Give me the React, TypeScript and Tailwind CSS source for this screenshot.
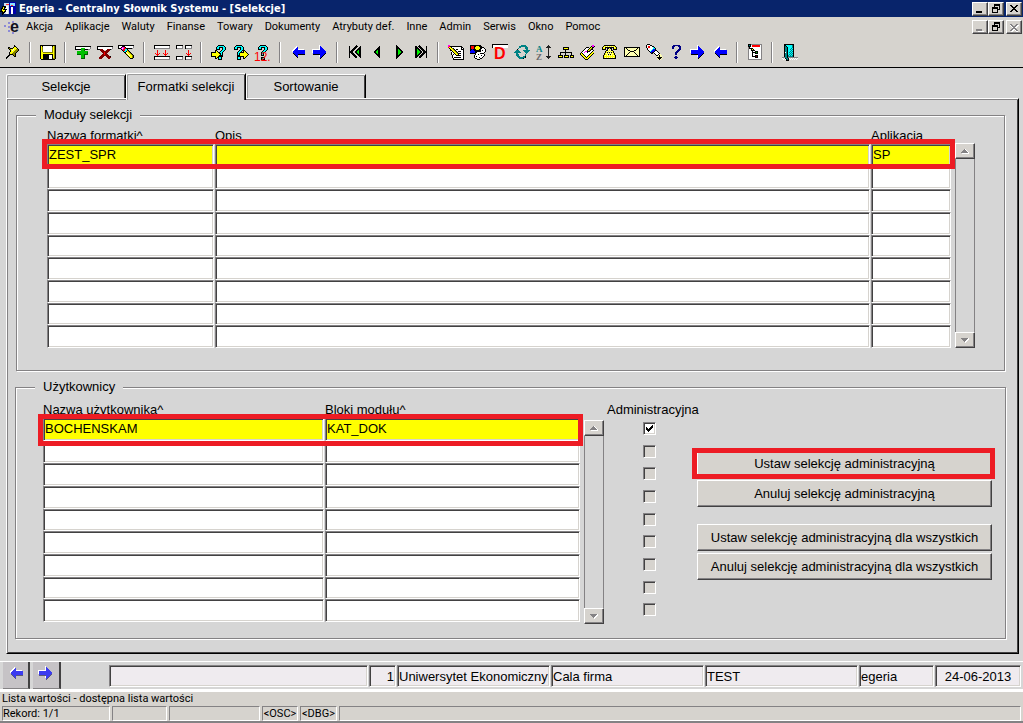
import type { ReactNode } from "react";

const MENU = ["Akcja", "Aplikacje", "Waluty", "Finanse", "Towary", "Dokumenty", "Atrybuty def.", "Inne", "Admin", "Serwis", "Okno", "Pomoc"];

const RAISED =
  "border border-t-white border-l-white border-b-[#424142] border-r-[#424142] bg-[#d6d3ce] shadow-[inset_-1px_-1px_0_#848284]";
const SUNKEN =
  "border border-t-[#848284] border-l-[#848284] border-b-white border-r-white shadow-[inset_1px_1px_0_#424142,inset_-1px_-1px_0_#d6d3ce]";

function Svg({ children, w = 16, h = 16 }: { children: ReactNode; w?: number; h?: number }) {
  return (
    <svg width={w} height={h} viewBox={`0 0 ${w} ${h}`} shapeRendering="crispEdges" aria-hidden="true" className="shrink-0 overflow-visible">
      {children}
    </svg>
  );
}

const PALETTE: Record<string, string> = {
  k: "#000000",
  w: "#ffffff",
  y: "#ffff00",
  o: "#848200",
  g: "#848284",
  l: "#d6d3ce",
  G: "#00c000",
  D: "#006000",
  r: "#ff0000",
  R: "#840000",
  b: "#0000ff",
  c: "#00ffff",
  t: "#008284",
  m: "#ff00ff",
  p: "#ffffb0",
  n: "#000084",
};

function Pixels({ rows, children }: { rows: string[]; children?: ReactNode }) {
  return (
    <Svg w={rows[0].length} h={rows.length}>
      {rows.flatMap((row, y) =>
        Array.from(row).map((ch, x) =>
          PALETTE[ch] ? <rect key={`${x}-${y}`} x={x} y={y} width="1" height="1" fill={PALETTE[ch]} /> : null,
        ),
      )}
      {children}
    </Svg>
  );
}

const PIN = [
  "........k......",
  "........kk.....",
  "..kk...kyyk....",
  "..kokkkyyyyk...",
  "...koyywyyook..",
  "....kywyyoook..",
  "....kyyyoook...",
  "...kyyyoook....",
  "...kyyoook.....",
  "...kkkkook.....",
  "..kk...kok.....",
  ".kk.....kk.....",
  "kk.............",
  "k..............",
];
const DISK = [
  "kkkkkkkkkkkkkkkk",
  "kykwwwwwwwwwkyok",
  "kyowwwwwwwwwoyok",
  "kyowwwwwwwwwoyok",
  "kyowwwwwwwwwoyok",
  "kyowwwwwwwwwoyok",
  "kyowwwwwwwwwoyok",
  "kyyooooooooooyok",
  "kyyyyyyyyyyyyyok",
  "kyykkkkkkkkkkyok",
  "kyykkkkkkwwwkyok",
  "kyykkkkkkwwwkyok",
  "kyykkkkkkwwwkyok",
  "kyykkkkkkwwwkook",
  ".kkkkkkkkkkkkkk.",
];
const ADD = [
  "kkkkkkkkkkkkkkkk",
  "kwwwwwwwwwwwwwwg",
  "kwwwwwGGGGwwwwwg",
  "kkkkkkGGGDkkkgg.",
  "......GGGD......",
  "..GGGGGGGGGGG...",
  "..GGGGGGGGGGD...",
  "..GGGGGGGGGGD...",
  "..DDDDGGGDDDD...",
  "......GGGD......",
  "......GGGD......",
  "......GGGD......",
  "......DDDD......",
];
const REMOVE = [
  "kkkkkkkkkkkkkkkk",
  "kwwwwwwwwwwwwwwg",
  "kwwwwwwwwwwwwwwg",
  "kkkRRRwwwwRRRkg.",
  "...RRRR..RRRR...",
  "....RRRRRRRR....",
  ".....RRrRRR.....",
  "......RrRR......",
  ".....RRrRRR.....",
  "....RRRRRRRR....",
  "...RRRR..RRRRk..",
  "..RRRR....RRRR..",
  "..RRR......RR...",
];
const ERASE = [
  "kkkkkkkkkkkkkkkk..",
  "kwwwkkkwwwwwwwwg..",
  "kwwkmmrkwwwwwwwg..",
  "kkkmwmrrkkkkkkg...",
  "...kmrrcck........",
  "....krrccok.......",
  ".....kcckyok......",
  "......kkwyyok.....",
  ".......kywyyok....",
  "........kywyyok...",
  ".........kywyyok..",
  "..........kyyyok..",
  "...........kyyok..",
  "............kkk...",
];
const INSERT = [
  "kkkkkkkkkkkkkkkk",
  "kwwwwwwwwwwwwwwg",
  "kwwwwwwwwwwwwwwg",
  "kggggggggggggggg",
  "................",
  "...r.......r....",
  "...r.......r....",
  "...r.......r....",
  ".r.r.r...r.r.r..",
  "..rrr.....rrr...",
  "...r.......r....",
  "kkkkkkkkkkkkkkkk",
  "kwwwwwwwwwwwwwwg",
  "kwwwwwwwwwwwwwwg",
  "kggggggggggggggg",
];
const DUPLICATE = [
  "kkkkkkk..kkkkkkk",
  "kwwwwwg..kwwwwwg",
  "kwwwwwg..kwwwwwg",
  "kgggggg..kgggggg",
  "................",
  "............r...",
  "............r...",
  "............r...",
  "..........r.r.r.",
  "...........rrr..",
  "............r...",
  "kkkkkkk..kkkkkkk",
  "kwwwwwg..kwwwwwg",
  "kwwwwwg..kwwwwwg",
  "kgggggg..kgggggg",
];
const QUERY_ENTER = [
  ".......kkkkkk...",
  "......kcccccck..",
  ".....kcckkkkcck.",
  ".....kcck..kcck.",
  ".....kkkk..kcck.",
  "....kk....kcck..",
  "....kyk..kcck...",
  "kkkkkyykkcck....",
  "kyyyyyyykkck....",
  "kyyyyyyyykck....",
  "kyyyyyyykkkk....",
  "kkkkkyykkkkk....",
  "....kykkcck.....",
  "....kk.kcck.....",
  ".......kkkk.....",
];
const QUERY_RUN = [
  "...kkkkkk.......",
  "..kcccccck......",
  ".kcckkkkcck.....",
  ".kcck..kcck.....",
  ".kkkk..kcck.....",
  "......kcckkk....",
  ".....kcck.kyk...",
  "....kcckkkkyyk..",
  "....kckyyyyyyyk.",
  "....kckyyyyyyyyk",
  "....kkkyyyyyyyk.",
  "....kkkkkkkyyk..",
  "....kcck..kyk...",
  "....kcck..kk....",
  "....kkkk........",
];
const QUERY_COUNT = [
  ".....kkkkkk.....",
  "....kcccccck....",
  "...kcckkkkcck...",
  "...kcck..kcck...",
  "...kkkk..kcck...",
  "........kcck....",
  ".......kcck.....",
  "......kcck......",
  "......kck.......",
  "......kck.......",
  "......kkk.......",
  "................",
  "......kkkk......",
  "......kcck......",
  "......kkkk......",
];
const HELP = [
  "..nnnnnnn..",
  ".nnn...nnn.",
  ".nn.....nn.",
  ".nn.....nn.",
  ".......nnn.",
  "......nnn..",
  ".....nnn...",
  "....nnn....",
  "....nn.....",
  "....nn.....",
  "...........",
  "....nn.....",
  "...nnnn....",
  "....nn.....",
];
const EDIT = [
  "mm..............",
  "mrkkkkkkkkkkkk..",
  "ryykwwwwwwwwwkk.",
  ".kyyokwwwwwwwkwk",
  "..kyyokwkkwwwkkk",
  "..kkyyokwwwwwwwk",
  "...wkyyokwkkkwwk",
  "...kwkyyokwwwwwk",
  "...kwwkyyokkkwwk",
  "...kwkwkyykwwwwk",
  "....kwwwkkkkkwwk",
  "....kwwwwwwwwwwk",
  "....kwkkkkkkkwwk",
  ".....kwwwwwwwwwk",
  ".....kkkkkkkkkkk",
];
const SHAPES = [
  "kkkkkkkkkkk.....",
  "krrrkkyyykkk....",
  "krrrkyyyyykkkk..",
  "krrrkyyyyykkwwk.",
  "kkbkkkyyykkwwwwk",
  "kbbbkkkkkkkwkwwk",
  "bbbbbkkkkkkwwwwk",
  "bbbbbkkwwwwwwwk.",
  "kkkkkkwwwwkkkk..",
  ".....kwwkwwwwwk.",
  "....kwwwwwwkwwk.",
  "....kwkwwwwwwk..",
  "....kwwwwkwwk...",
  ".....kkwwwkk....",
  ".......kkk......",
];
const REFRESH = [
  ".......ttttt....",
  ".....tttttttt...",
  ".....tt....ttt..",
  "....t......ttt..",
  "...k........tt..",
  "..ttt....ttttttt",
  ".ttttt....ttttt.",
  "ttttttt....ttt..",
  "..tt........t...",
  "..ttt......t....",
  "..ttt......t....",
  "...ttt...ttk....",
  "....tttttttk....",
  ".....ttttk......",
];
const TREE = [
  ".....kkkkkk.....",
  ".....kyyyyk.....",
  ".....kkkkkk.....",
  ".......k........",
  ".......k........",
  "..kkkkkkkkkkkk..",
  "..k....k.....k..",
  "..k....k.....k..",
  "kkkkk.kkkkk.kkkk",
  "kyyyk.kyyyk.kyyk",
  "kkkkk.kkkkk.kkkk",
];
const BOOK = [
  "............mm..",
  "...........kmmk.",
  "......kkk.kykk..",
  ".....kwwwkyok...",
  "....kwwwkyokk...",
  "...kwwwkyokwwk..",
  "..kwwmmkkkwwk...",
  ".kwwmwwkwwwkyy..",
  "kykwwwwwwwkyyk..",
  "kyykwwwwwkyyk...",
  ".kyykwwwkyyk....",
  "..kyykwkyyk.....",
  "...kyykyyk......",
  "....kyyyk.......",
  ".....kkk........",
];
const PHONE = [
  "..kkkkkkkkkkk...",
  ".kyypypypypyyk..",
  "kypkkkkkkkkkpyk.",
  "kyyk.kk.kk.kyyk.",
  "kkkk.kpypk.kkkk.",
  "....kkpypkk.....",
  "...kypypypyk....",
  "...kyk.k.kyk....",
  "..kypypypypyk...",
  "..kyypk.kpyyk...",
  ".kypypypypypyk..",
  ".kyyyyyyyyyyyk..",
  ".kypypypypypyk..",
  ".kkkkkkkkkkkkk..",
];
const MAIL = [
  "kkkkkkkkkkkkkkkk",
  "kpkppppppppppkpk",
  "kppkppppppppkppk",
  "kpppkkppppkkpppk",
  "kpppppkkkkpppppk",
  "kppppkppppkppppk",
  "kpppkppppppkpppk",
  "kppkppppppppkppk",
  "kpkppppppppppkpk",
  "kkkkkkkkkkkkkkkk",
];
const TORCH = [
  ".kkk.............",
  "kwwwkk...........",
  "kwrrwwkk.........",
  "kwrrwwwck........",
  ".kwwwwwcck.......",
  ".kwwwwcbbk.......",
  "..kwwcbbbkk......",
  "...kcbbbkwwk.....",
  "....kbkkwwwwk....",
  ".....kk.kwwwwk...",
  ".........kwwkpp..",
  "..........kkpkpp.",
  "...........ppkpp.",
  "...........kkkkkp",
  "...........pkkkp.",
  "............pkp..",
];
const OUTLINE = [
  "kkkggggggggggg",
  "ktkwrrrrrrrrwg",
  "kkkwrrrrrrrrwg",
  "gkwwwwwwwwwwwg",
  "gkkkkwwwwwwwwg",
  "gwwkykwwwwwwwg",
  "gwwkkkkwwwwwwg",
  "gwwwkwwkkkwwwg",
  "gwwwkkkkGkwwwg",
  "gwwwkwwkkkwwwg",
  "gwwwkwwwwwwwwg",
  "gwwwkwwkkkwwwg",
  "gwwwkkkkRkwwwg",
  "gwwwwwwkkkwwwg",
  "gwwwwwwwwwwwwg",
  "gggggggggggggg",
];
const DOOR = [
  "..kkkkkkkkkk....",
  "..kkcccccctk....",
  "..ktkccccctk....",
  "..kttkcccctk....",
  "..kttkccctck....",
  "..kttkcctctk....",
  "..kttkccctck....",
  "..kttkcctctk....",
  "..kwtkctctck....",
  "..kttkcctctk....",
  "..kttkctctck....",
  "..kttktctctk....",
  "..kttktttttk....",
  "gggttkgggggggggg",
  "w.wkttkw.w.w.w.w",
  ".w.wktk.w.w.w.w.",
  "....kkk.........",
];

function Arrow({ left = false, muted = false }: { left?: boolean; muted?: boolean }) {
  const d = left ? "M15 5H8V1L2 7l6 6V9h7z" : "M1 5h7V1l6 6-6 6V9H1z";
  return (
    <Svg w={16} h={15}>
      <path d={d} fill="#fff" transform="translate(-1 -1)" />
      <path d={d} fill={muted ? "#5a5a7a" : "#000"} transform="translate(0 1)" />
      <path d={d} fill={muted ? "#3c3cf0" : "#00f"} />
    </Svg>
  );
}

function Step({ back = false, end = false }: { back?: boolean; end?: boolean }) {
  return (
    <Svg w={14} h={14}>
      <g transform={back ? "translate(14 0) scale(-1 1)" : undefined}>
        {end ? (
          <>
            <path d="M5 1l6 6-6 6" fill="#d6d3ce" stroke="#000" strokeWidth="2" />
            <path d="M1 1v12h1l6-6-6-6z" fill="#000" />
            <path d="M3 4v6l3-3z" fill="#0e0" />
            <path d="M12 1h1v12h-1z" fill="#000" />
          </>
        ) : (
          <>
            <path d="M4 0v14l7-7z" fill="#000" />
            <path d="M6 4v6l3-3z" fill="#0e0" />
          </>
        )}
      </g>
    </Svg>
  );
}

const LETTER_D = (
  <Svg>
    <path d="M0 0h16v4H0z" fill="#fff" />
    <path d="M0 4V0h16" fill="none" stroke="#000" />
    <text x="2" y="15" fontSize="16" fontWeight="700" fill="#f00" fontFamily="Liberation Sans, sans-serif">
      D
    </text>
  </Svg>
);

const SORT = (
  <Svg>
    <text x="0" y="8" fontSize="9" fontWeight="700" fill="#008284" fontFamily="Liberation Serif, serif">
      A
    </text>
    <text x="0" y="16" fontSize="9" fontWeight="700" fill="#6b696b" fontFamily="Liberation Serif, serif">
      Z
    </text>
    <path d="M12 1h1v14h-1zM11 2h3v1h-3zM10 3h5v1h-5zM10 12h5v1h-5zM11 13h3v1h-3z" fill="#222" />
  </Svg>
);

const COUNT = (
  <Pixels rows={QUERY_COUNT}>
    <text x="-1" y="16" fontSize="12" fill="#f00" fontFamily="Liberation Sans, sans-serif">
      12.
    </text>
  </Pixels>
);

const TOOLS: { label: string; icon: ReactNode }[][] = [
  [{ label: "Przypnij", icon: <Pixels rows={PIN} /> }],
  [{ label: "Zapisz", icon: <Pixels rows={DISK} /> }],
  [
    { label: "Dodaj rekord", icon: <Pixels rows={ADD} /> },
    { label: "Usuń rekord", icon: <Pixels rows={REMOVE} /> },
    { label: "Wyczyść rekord", icon: <Pixels rows={ERASE} /> },
  ],
  [
    { label: "Powiel rekord", icon: <Pixels rows={INSERT} /> },
    { label: "Powiel pole", icon: <Pixels rows={DUPLICATE} /> },
  ],
  [
    { label: "Wprowadź zapytanie", icon: <Pixels rows={QUERY_ENTER} /> },
    { label: "Wykonaj zapytanie", icon: <Pixels rows={QUERY_RUN} /> },
    { label: "Policz rekordy", icon: COUNT },
  ],
  [
    { label: "Poprzedni blok", icon: <Arrow left /> },
    { label: "Następny blok", icon: <Arrow /> },
  ],
  [
    { label: "Pierwszy rekord", icon: <Step back end /> },
    { label: "Poprzedni rekord", icon: <Step back /> },
    { label: "Następny rekord", icon: <Step /> },
    { label: "Ostatni rekord", icon: <Step end /> },
  ],
  [
    { label: "Edytuj", icon: <Pixels rows={EDIT} /> },
    { label: "Atrybuty", icon: <Pixels rows={SHAPES} /> },
    { label: "Dokumenty", icon: LETTER_D },
    { label: "Odśwież", icon: <Pixels rows={REFRESH} /> },
    { label: "Sortuj", icon: SORT },
    { label: "Struktura", icon: <Pixels rows={TREE} /> },
    { label: "Notatki", icon: <Pixels rows={BOOK} /> },
    { label: "Telefon", icon: <Pixels rows={PHONE} /> },
    { label: "Poczta", icon: <Pixels rows={MAIL} /> },
    { label: "Szukaj", icon: <Pixels rows={TORCH} /> },
    { label: "Pomoc", icon: <Pixels rows={HELP} /> },
    { label: "Dalej", icon: <Arrow /> },
    { label: "Wstecz", icon: <Arrow left /> },
  ],
  [{ label: "Nawigator", icon: <Pixels rows={OUTLINE} /> }],
  [{ label: "Wyjście", icon: <Pixels rows={DOOR} /> }],
];

function WindowButtons({ muted = false }: { muted?: boolean }) {
  const ink = muted ? "#848284" : "#000";
  const base = `flex h-[14px] w-4 items-center justify-center ${RAISED}`;
  return (
    <div className="flex shrink-0 pr-px">
      <button type="button" aria-label="Minimalizuj" className={base}>
        <Svg w={10} h={10}>
          {muted && <path d="M2 9h6v1H2z" fill="#fff" transform="translate(1 0)" />}
          <path d="M1 7h6v2H1z" fill={ink} />
        </Svg>
      </button>
      <button type="button" aria-label="Przywróć" className={base}>
        <Svg w={10} h={10}>
          <path d="M3 0h6v6H7V5h1V2H4v1H3zM1 3h6v6H1zM2 5v3h4V5z" fill="#000" fillRule="evenodd" />
        </Svg>
      </button>
      <button type="button" aria-label="Zamknij" className={`ml-0.5 ${base}`}>
        <Svg w={10} h={9}>
          {muted && <path d="M2 2l7 7M9 2L2 9" stroke="#fff" strokeWidth="2" />}
          <path d="M1 1h2v1h1v1h2V2h1V1h2v1H8v1H7v1H6v1h1v1h1v1h1v1H7V7H6V6H4v1H3v1H1V7h1V6h1V5h1V4H3V3H2V2H1z" fill={ink} />
        </Svg>
      </button>
    </div>
  );
}

function ScrollBar() {
  return (
    <div className="flex w-5 flex-col border-x border-[#848284]">
      <button type="button" aria-label="Przewiń w górę" className={`-mx-px flex h-4 items-center justify-center ${RAISED}`}>
        <Svg w={8} h={5}>
          <path d="M4 0l4 4v1H1z" fill="#fff" />
          <path d="M3 0h1v1h1v1h1v1h1v1H0V3h1V2h1V1h1z" fill="#848284" />
        </Svg>
      </button>
      <div className="flex-1 bg-[#d6d6d6]" />
      <button type="button" aria-label="Przewiń w dół" className={`-mx-px flex h-4 items-center justify-center ${RAISED}`}>
        <Svg w={8} h={5}>
          <path d="M8 0v1L4 5 3 4l4-4z" fill="#fff" />
          <path d="M0 0h7v1H6v1H5v1H4v1H3V3H2V2H1V1H0z" fill="#848284" />
        </Svg>
      </button>
    </div>
  );
}

interface Column {
  title: string;
  width: string;
  value: string;
}

function RecordTable({ columns, headHeight }: { columns: Column[]; headHeight: string }) {
  return (
    <table className="w-full table-fixed border-collapse">
      <thead>
        <tr>
          {columns.map((c) => (
            <th key={c.title} scope="col" className={`p-0 text-left align-bottom font-normal leading-4 ${headHeight} ${c.width}`}>
              {c.title}
            </th>
          ))}
        </tr>
      </thead>
      <tbody className="[&>tr:nth-child(3n+2)_input]:h-[22px]">
        {Array.from({ length: 9 }, (_, i) => (
          <tr key={i}>
            {columns.map((c) => (
              <td key={c.title} className="p-0 pr-px">
                <input
                  aria-label={`${c.title} ${i + 1}`}
                  defaultValue={i === 0 ? c.value : ""}
                  className={`block h-[23px] w-full rounded-none px-px pb-0.5 outline-none ${SUNKEN} ${i === 0 ? "bg-[#ffff00]" : "bg-white"}`}
                />
              </td>
            ))}
          </tr>
        ))}
      </tbody>
    </table>
  );
}

function AdminChecks() {
  return (
    <div className="-mb-1 w-[93px] shrink-0">
      <div className="flex h-7 items-end whitespace-nowrap pb-1 pl-[3px] leading-4">Administracyjna</div>
      <div className="pl-[39px] [&>div:nth-child(3n+2)]:h-[22px]">
        {Array.from({ length: 9 }, (_, i) => (
          <div key={i} className="relative h-[23px]">
            <input
              type="checkbox"
              aria-label={`Administracyjna ${i + 1}`}
              defaultChecked={i === 0}
              className={`peer block size-[13px] appearance-none rounded-none bg-[#d6d3ce] checked:bg-white ${SUNKEN}`}
            />
            <svg viewBox="0 0 13 13" shapeRendering="crispEdges" aria-hidden="true" className="pointer-events-none absolute left-0 top-0 hidden size-[13px] peer-checked:block">
              <path d="M3 5h1v1h1v1h1V6h1V5h1V4h1V3h1v3H9v1H8v1H7v1H6v1H5V9H4V8H3z" fill="#000" />
            </svg>
          </div>
        ))}
      </div>
    </div>
  );
}

function Tab({ label, active = false }: { label: string; active?: boolean }) {
  return (
    <button
      type="button"
      role="tab"
      aria-selected={active}
      className={`w-[120px] rounded-tl-[2px] border-l border-r border-t border-l-white border-r-black border-t-white bg-[#d6d6d6] text-center shadow-[inset_1px_1px_0_#9c9c9c,inset_-1px_0_0_#424142] ${
        active ? "relative z-10 -mb-0.5 h-[27px]" : "h-6 pt-px"
      }`}
    >
      {label}
    </button>
  );
}

function ActionButton({ children, className = "" }: { children: ReactNode; className?: string }) {
  return (
    <button type="button" className={`h-[27px] w-full whitespace-nowrap text-center ${RAISED} ${className}`}>
      {children}
    </button>
  );
}

function Group({ title, className, children }: { title: string; className: string; children: ReactNode }) {
  return (
    <fieldset className={`border border-[#848284] shadow-[1px_1px_0_#fff,inset_1px_1px_0_#fff] ${className}`}>
      <legend className="ml-[19px] bg-[#d6d6d6] px-2 leading-[14px]">{title}</legend>
      {children}
    </fieldset>
  );
}

const FOOTER_FIELDS = [
  { label: "Komunikat", value: "", width: "grow-[255] basis-0" },
  { label: "Numer firmy", value: "1", width: "w-[27px] shrink-0 text-right" },
  { label: "Nazwa firmy", value: "Uniwersytet Ekonomiczny", width: "grow-[149] basis-0" },
  { label: "Zakres", value: "Cala firma", width: "grow-[149] basis-0" },
  { label: "Baza", value: "TEST", width: "grow-[149] basis-0" },
  { label: "Użytkownik", value: "egeria", width: "grow-[71] basis-0" },
  { label: "Data", value: "24-06-2013", width: "w-[86px] shrink-0 text-center" },
];

const STATUS_CELL = "h-[15px] shrink-0 border border-b-white border-l-[#848284] border-r-white border-t-[#848284] leading-[14px]";
const PAGER = "flex h-[27px] items-center justify-center border-b border-r-2 border-b-[#848284] border-r-[#424142] bg-[#c6c3c6] pb-1";

export default function App() {
  return (
    <div className="flex min-h-screen flex-col bg-[#d6d6d6] font-['Liberation_Sans',Arial,sans-serif] text-[13px] leading-4 text-black">
      <header className="bg-[#d6d3ce] text-[11px]">
        <div className="flex h-[17px] items-center bg-[#08246b] font-['DejaVu_Sans_Condensed','DejaVu_Sans',sans-serif] text-white">
          <Svg w={17} h={15}>
            <path d="M4 2h11v11H4z" fill="#cde" />
            <path d="M9 1h7v12H9z" fill="#00a" />
            <path d="M10 2h5v3h-5z" fill="#8df" />
            <path d="M6 5h2v8H6zM11 6h2v7h-2z" fill="#fff" />
            <path d="M6 3h3v1H6zM11 4h2v1h-2z" fill="#f33" />
            <path d="M3 5l3 0-2 3h3l-5 6 1-4H1z" fill="#ff0" stroke="#000" strokeWidth="1" />
          </Svg>
          <h1 className="ml-0.5 flex-1 truncate font-bold">Egeria - Centralny Słownik Systemu - [Selekcje]</h1>
          <WindowButtons />
        </div>
        <div className="flex h-5 items-center font-['Roboto','Liberation_Sans',sans-serif]">
          <Svg w={20} h={16}>
            <path d="M4 6h2v2H4zM8 3h2v2H8zM8 7h2v2H8zM8 11h2v2H8zM12 2h2v2h-2zM12 13h2v2h-2z" fill="#8c8ad6" />
            <text x="10" y="13" fontSize="16" fontWeight="700" fill="#101020" fontFamily="Liberation Sans, sans-serif">
              e
            </text>
          </Svg>
          <nav className="flex flex-1">
            {MENU.map((m) => (
              <button key={m} type="button" className="whitespace-nowrap px-1.5">
                {m}
              </button>
            ))}
          </nav>
          <WindowButtons muted />
        </div>
        <div className="flex h-[31px] items-center border-b border-black pl-0.5" role="toolbar" aria-label="Narzędzia">
          {TOOLS.map((group, g) => (
            <div key={g} className="flex items-center">
              {g > 0 && <div className="ml-[5px] mr-1.5 h-[21px] w-0.5 border-l border-r border-l-[#848284] border-r-white" />}
              {group.map((t) => (
                <button key={t.label} type="button" aria-label={t.label} className="flex h-6 w-[22px] items-center justify-center">
                  {t.icon}
                </button>
              ))}
            </div>
          ))}
        </div>
      </header>

      <main className="flex-1 pb-[7px] pl-1.5 pr-1 pt-[5px]">
        <div className="flex items-end" role="tablist">
          <Tab label="Selekcje" />
          <Tab label="Formatki selekcji" active />
          <Tab label="Sortowanie" />
        </div>

        <div className="border border-b-black border-l-white border-r-black border-t-white pb-3.5 pl-2 pr-3 pt-[9px] shadow-[inset_1px_1px_0_#848284,inset_-1px_-1px_0_#424142]">
          <Group title="Moduły selekcji" className="mx-px pb-[22px]">
            <div className="flex gap-[3px] pl-[30px] pr-[29px]">
              <div className="relative flex-1">
                <RecordTable
                  headHeight="h-[22px]"
                  columns={[
                    { title: "Nazwa formatki^", width: "w-[168px]", value: "ZEST_SPR" },
                    { title: "Opis", width: "", value: "" },
                    { title: "Aplikacja", width: "w-[81px]", value: "SP" },
                  ]}
                />
                <div className="pointer-events-none absolute -left-[5px] -right-[3px] top-[17px] h-[30px] border-[5px] border-[#ed1c24]" />
              </div>
              <div className="flex pt-[21px]">
                <ScrollBar />
              </div>
            </div>
          </Group>

          <Group title="Użytkownicy" className="mt-[9px] pb-4">
            <div className="flex pl-[27px] pr-[13px]">
              <div className="relative mr-[3px] flex-1">
                <RecordTable
                  headHeight="h-6"
                  columns={[
                    { title: "Nazwa użytkownika^", width: "w-[282px]", value: "BOCHENSKAM" },
                    { title: "Bloki modułu^", width: "", value: "KAT_DOK" },
                  ]}
                />
                <div className="pointer-events-none absolute -left-[5px] -right-0.5 top-5 h-8 border-[5px] border-[#ed1c24]" />
              </div>
              <div className="-mb-0.5 flex pt-[26px]">
                <ScrollBar />
              </div>
              <AdminChecks />
              <div className="w-[295px] shrink-0 pt-14">
                <div className="relative">
                  <ActionButton>Ustaw selekcję administracyjną</ActionButton>
                  <div className="pointer-events-none absolute -left-[5px] -right-[3px] -top-0.5 h-[31px] border-[5px] border-[#ed1c24]" />
                </div>
                <ActionButton className="mt-[3px]">Anuluj selekcję administracyjną</ActionButton>
                <ActionButton className="mt-[17px]">Ustaw selekcję administracyjną dla wszystkich</ActionButton>
                <ActionButton className="mt-0.5">Anuluj selekcję administracyjną dla wszystkich</ActionButton>
              </div>
            </div>
          </Group>
        </div>
      </main>

      <footer>
        <div className="flex h-[28px] items-start border-t border-white pl-[3px] pr-0.5">
          <button type="button" aria-label="Poprzednia strona" className={`mr-[3px] w-[27px] ${PAGER}`}>
            <Arrow left muted />
          </button>
          <button type="button" aria-label="Następna strona" className={`mr-12 w-7 ${PAGER}`}>
            <Arrow muted />
          </button>
          <div className="flex min-w-0 flex-1 gap-px pt-[3px]">
            {FOOTER_FIELDS.map((f) => (
              <input
                key={f.label}
                aria-label={f.label}
                readOnly
                defaultValue={f.value}
                className={`h-[22px] min-w-0 rounded-none bg-[#efebef] px-px outline-none ${SUNKEN} ${f.width}`}
              />
            ))}
          </div>
        </div>
        <div className="border-b-2 border-t-[3px] border-b-[#848284] border-t-white bg-[#d6d3ce] px-0.5 font-['Roboto','Liberation_Sans',sans-serif] text-[11px]">
          <p className="h-[14px] leading-[14px]">Lista wartości - dostępna lista wartości</p>
          <div className="flex gap-0.5">
            <div className={`w-[108px] ${STATUS_CELL}`}>Rekord: 1/1</div>
            <div className={`w-[55px] ${STATUS_CELL}`} />
            <div className={`w-[91px] ${STATUS_CELL}`} />
            <div className={`w-9 text-center ${STATUS_CELL}`}>&lt;OSC&gt;</div>
            <div className={`w-[37px] text-center ${STATUS_CELL}`}>&lt;DBG&gt;</div>
            <div className={`flex-1 ${STATUS_CELL}`} />
          </div>
        </div>
      </footer>
    </div>
  );
}
